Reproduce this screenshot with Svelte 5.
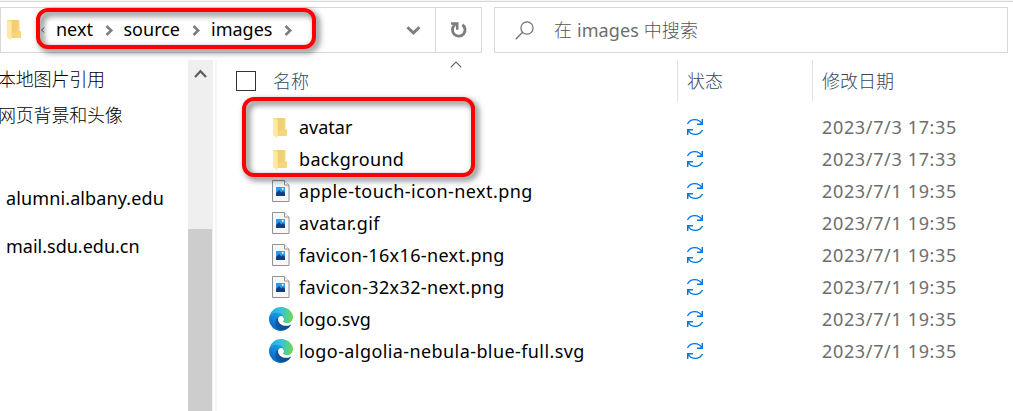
<script>
  const crumbs = [
    { name: 'next', width: 37 },
    { name: 'source', width: 57 },
    { name: 'images', width: 61 }
  ];
  const files = [
    { name: 'avatar', kind: 'folder', date: '2023/7/3 17:35', tracking: 0 },
    { name: 'background', kind: 'folder', date: '2023/7/3 17:33', tracking: 0.35 },
    { name: 'apple-touch-icon-next.png', kind: 'image', date: '2023/7/1 19:35', tracking: 0.43 },
    { name: 'avatar.gif', kind: 'image', date: '2023/7/1 19:35', tracking: 0.35 },
    { name: 'favicon-16x16-next.png', kind: 'image', date: '2023/7/1 19:35', tracking: 0.35 },
    { name: 'favicon-32x32-next.png', kind: 'image', date: '2023/7/1 19:35', tracking: 0.35 },
    { name: 'logo.svg', kind: 'edge', date: '2023/7/1 19:35', tracking: 0.1 },
    { name: 'logo-algolia-nebula-blue-full.svg', kind: 'edge', date: '2023/7/1 19:35', tracking: 0.41 }
  ];
</script>

{#snippet folder()}
  <svg class="folder" width="16" height="22" viewBox="0 0 16 22">
    <path d="M1 1h12.500v11l1.500.5V19H3z" fill="#f7d681" />
    <path d="M6 1h5.500v10.500L9 14H6z" fill="#f0ca6c" opacity=".6" />
    <path d="M1 1l4.500 2v18.500L1 18.500z" fill="#ffe9a8" />
  </svg>
{/snippet}

<div class="explorer">
  <header class="toolbar">
    <div class="address">
      <div class="path">
        <span class="path-icon">{@render folder()}</span>
        <svg class="overflow" width="5" height="8" viewBox="0 0 5 8"><path d="M4.300 1.500L1.500 4l2.800 2.500" fill="none" stroke="#666" /></svg>
        {#each crumbs as crumb}
          <span class="crumb" style="width: {crumb.width}px">{crumb.name}</span>
          <svg class="chevron" width="9" height="11" viewBox="0 0 9 11"><path d="M1.5 1L6.2 5.5 1.5 10" fill="none" stroke="#7e7e7e" stroke-width="2.6" /></svg>
        {/each}
      </div>
      <div class="drop"><svg width="15" height="11" viewBox="0 0 15 11"><path d="M1.4 2.2l6 5.7 6-5.7" fill="none" stroke="#7e7e7e" stroke-width="2.9" /></svg></div>
      <div class="refresh">
        <svg width="18" height="18" viewBox="0 0 18 18"><path d="M12.4 3.7A6.3 6.3 0 1 1 4.4 4.3" fill="none" stroke="#7e7e7e" stroke-width="2.9" /><path d="M1 1.2h7.5v7.5H6V5L1 3.6z" fill="#7e7e7e" /></svg>
      </div>
      <div class="highlight crumbs-highlight"></div>
    </div>
    <div class="search">
      <svg width="19" height="19" viewBox="0 0 19 19"><circle cx="12" cy="7" r="6.1" fill="none" stroke="#707070" stroke-width="1.2" /><path d="M7.6 11.3L.7 18.2" stroke="#707070" stroke-width="1.3" /></svg>
      <span class="hint"><span class="han">在</span> images <span class="han">中搜索</span></span>
    </div>
  </header>

  <div class="body">
    <nav class="side">
      <div class="item cjk">本地图片引用</div>
      <div class="item cjk second">网页背景和头像</div>
      <div class="item alumni">alumni.albany.edu</div>
      <div class="item mail">mail.sdu.edu.cn</div>
    </nav>
    <div class="scrollbar">
      <svg width="13" height="10" viewBox="0 0 13 10"><path d="M1 8l5.5-5.8L12 8" fill="none" stroke="#606060" stroke-width="2.3" /></svg>
      <div class="thumb"></div>
    </div>
    <main class="list">
      <div class="head">
        <div class="col name-col"><span class="check"></span><span class="label">名称</span></div>
        <div class="col status-col"><span class="label">状态</span></div>
        <div class="col date-col"><span class="label">修改日期</span></div>
        <svg class="sort" width="12" height="7" viewBox="0 0 12 7"><path d="M.7 6.3L6 1l5.3 5.3" fill="none" stroke="#666" stroke-width="1.1" /></svg>
      </div>
      <div class="rows">
        {#each files as file}
          <div class="row">
            <span class="icon {file.kind}-icon">
              {#if file.kind === 'folder'}
                {@render folder()}
              {:else if file.kind === 'image'}
                <svg width="18" height="22" viewBox="0 0 18 22">
                  <path d="M.5.5h12l4.500 4.500v16.500H.5z" fill="#f8f8f8" stroke="#929292" />
                  <path d="M12.500.5v4.500H17" fill="#fff" stroke="#929292" />
                  <path d="M4 7h9v9H4z" fill="#2d9cf0" />
                  <path d="M4 13l3-3 2.500 2.500L11 11l2 2v3H4z" fill="#123e83" />
                  <circle cx="10.700" cy="8.800" r="1" fill="#fff" />
                </svg>
              {:else}
                <svg width="24" height="24" viewBox="0 0 256 256">
                  <defs>
                    <linearGradient id="deep" x1="60" y1="177" x2="241" y2="177" gradientUnits="userSpaceOnUse"><stop offset="0" stop-color="#0c59a4" /><stop offset="1" stop-color="#114a8b" /></linearGradient>
                    <linearGradient id="blue" x1="150" y1="95" x2="45" y2="230" gradientUnits="userSpaceOnUse"><stop offset="0" stop-color="#1b9de2" /><stop offset=".5" stop-color="#1384d8" /><stop offset="1" stop-color="#0b64c0" /></linearGradient>
                    <linearGradient id="green" x1="10" y1="80" x2="250" y2="110" gradientUnits="userSpaceOnUse"><stop offset="0" stop-color="#28a9ee" /><stop offset=".45" stop-color="#31c4dc" /><stop offset="1" stop-color="#6bd953" /></linearGradient>
                  </defs>
                  <path d="M231 190a94 94 0 0 1-11 5 102 102 0 0 1-36 6c-47 0-88-32-88-74a31 31 0 0 1 16-27c-43 2-54 46-54 72 0 74 68 81 82 81 8 0 20-2 27-4l1-1a128 128 0 0 0 67-53 4 4 0 0 0-4-5z" fill="url(#deep)" />
                  <path d="M106 241a79 79 0 0 1-23-21 81 81 0 0 1 29-120c3-1 8-4 15-4a32 32 0 0 1 26 13 32 32 0 0 1 6 18c0-.2 25-80-79-80-44 0-80 42-80 78a130 130 0 0 0 12 56 128 128 0 0 0 156 67 75 75 0 0 1-62-7z" fill="url(#blue)" />
                  <path d="M152 149c-1 1-3 3-3 6 0 3 2 6 5 8 14 10 42 9 42 9a60 60 0 0 0 30-8 61 61 0 0 0 30-53c.3-22-8-37-11-44C224 26 178 0 128 0A128 128 0 0 0 0 126c.5-36 37-66 80-66 4 0 24 .3 42 10 16 8 25 19 31 29 6 11 7 25 7 31 0 5-3 14-8 19z" fill="url(#green)" />
                </svg>
              {/if}
            </span>
            <span class="name" style="letter-spacing: {file.tracking}px">{file.name}</span>
            <span class="status"><svg width="16" height="16" viewBox="0 0 16 16"><path d="M.5 5C3.500-.8 12-.8 15 5M15.300 0v5.300H10M15.500 11C12.500 16.800 4 16.800 1 11M.7 16v-5.300H6" fill="none" stroke="#0878d7" stroke-width="1.400" /></svg></span>
            <span class="date">{file.date}</span>
          </div>
        {/each}
      </div>
      <div class="highlight folders-highlight"></div>
    </main>
  </div>
</div>

<style>
  :global(body) { margin: 0; background: #fff; }
  .explorer { width: 1013px; height: 411px; overflow: hidden; background: #fff; color: #000; font: 18px/24px "Noto Sans", "Noto Sans CJK SC", sans-serif; white-space: nowrap; box-sizing: border-box; }
  .explorer *, .explorer *::before { box-sizing: border-box; }
  svg { display: block; flex: none; }
  .toolbar { display: flex; height: 60px; padding-top: 5px; border-top: 1px solid #f5f5f5; box-shadow: inset 0 1px #d9d9d9; padding-top: 6px; gap: 12px; position: relative; z-index: 2; }
  .address { display: flex; width: 482px; height: 46px; border: 1px solid #d9d9d9; position: relative; }
  .path { display: flex; align-items: center; width: 404px; padding-left: 5px; }
  .path-icon { margin-right: 18px; }
  .overflow { margin-right: 11px; }
  .crumb { margin-bottom: 2px; }
  .chevron { margin: 0 10px 0 11.500px; }
  .drop { display: flex; width: 30px; align-items: center; padding-left: 1px; }
  .refresh { display: flex; width: 46px; border-left: 1px solid #d9d9d9; align-items: center; justify-content: center; }
  .search { display: flex; align-items: center; width: 514px; height: 46px; border: 1px solid #d9d9d9; padding-left: 20px; gap: 20px; color: #6d6d6d; }
  .hint { letter-spacing: .1px; }
  .han { font-family: "Noto Sans CJK SC", sans-serif; font-weight: 300; line-height: 20px; color: #555; }
  .highlight { position: absolute; border: 4px solid #fe0000; border-radius: 12px; filter: drop-shadow(3px 3px 3px rgba(0,0,0,.65)); pointer-events: none; }
  .crumbs-highlight { left: 35px; top: 0; width: 280px; height: 41px; }
  .body { display: flex; height: 351px; }
  .side { width: 188px; overflow: hidden; padding-top: 6px; }
  .cjk { margin-left: -2px; font-family: "Noto Sans CJK SC", sans-serif; font-weight: 300; letter-spacing: -.2px; }
  .second { margin-top: 12px; }
  .alumni { margin: 60px 0 0 6px; letter-spacing: .12px; }
  .mail { margin: 24px 0 0 6px; }
  .scrollbar { width: 25px; background: #efefef; display: flex; flex-direction: column; }
  .scrollbar svg { margin: 9px 0 0 6px; }
  .thumb { width: 24px; height: 182px; background: #cdcdcd; margin-top: auto; }
  .list { position: relative; flex: 1; margin-left: 2px; border-left: 2px solid #f5f5f5; }
  .head { position: relative; display: flex; height: 42px; color: #34495f; font-family: "Noto Sans CJK SC", sans-serif; font-weight: 300; }
  .col { display: flex; align-items: center; }
  .label { padding-bottom: 3px; }
  .name-col { width: 460px; padding-left: 19px; }
  .check { width: 20px; height: 20px; border: 1px solid #333; margin-right: 17px; }
  .status-col { width: 135px; border-left: 1px solid #e2e2e2; padding-left: 9px; }
  .date-col { border-left: 1px solid #e2e2e2; padding-left: 9px; }
  .sort { position: absolute; left: 233px; top: 1px; }
  .rows { padding-top: 9px; }
  .row { display: flex; height: 32px; align-items: center; }
  .icon { display: flex; width: 24px; margin-left: 52px; justify-content: center; }
  .folder-icon { padding: 2px 2px 0 0; }
  .name { width: 388px; margin-left: 6px; }
  .status { width: 135px; }
  .date { color: #6d6d6d; letter-spacing: .65px; }
  .folders-highlight { left: 25px; top: 37px; width: 233px; height: 80px; }
</style>
